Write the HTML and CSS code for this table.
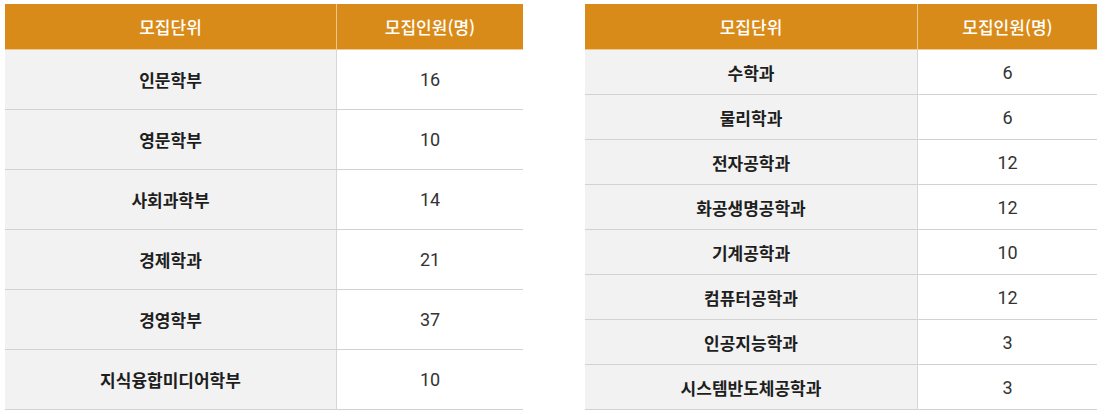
FILE: index.html
```html
<!DOCTYPE html>
<html lang="ko">
<head>
<meta charset="utf-8">
<link rel="stylesheet" href="styles.css">
</head>
<body>
<div class="wrap">
  <div class="tbl tbl-left">
    <div class="th c1">모집단위</div><div class="th c2">모집인원(명)</div>
    <div class="td c1">인문학부</div><div class="td c2">16</div>
    <div class="td c1">영문학부</div><div class="td c2">10</div>
    <div class="td c1">사회과학부</div><div class="td c2">14</div>
    <div class="td c1">경제학과</div><div class="td c2">21</div>
    <div class="td c1">경영학부</div><div class="td c2">37</div>
    <div class="td c1">지식융합미디어학부</div><div class="td c2">10</div>
  </div>
  <div class="tbl tbl-right">
    <div class="th c1">모집단위</div><div class="th c2">모집인원(명)</div>
    <div class="td c1">수학과</div><div class="td c2">6</div>
    <div class="td c1">물리학과</div><div class="td c2">6</div>
    <div class="td c1">전자공학과</div><div class="td c2">12</div>
    <div class="td c1">화공생명공학과</div><div class="td c2">12</div>
    <div class="td c1">기계공학과</div><div class="td c2">10</div>
    <div class="td c1">컴퓨터공학과</div><div class="td c2">12</div>
    <div class="td c1">인공지능학과</div><div class="td c2">3</div>
    <div class="td c1">시스템반도체공학과</div><div class="td c2">3</div>
  </div>
</div>
</body>
</html>
```
FILE: styles.css
```css
* { box-sizing: border-box; }
html, body { margin: 0; padding: 0; background: #fff; }
body {
  font-family: "Roboto", "Noto Sans CJK KR", sans-serif;
  font-size: 17px;
  color: #222;
}
.wrap {
  display: flex;
  align-items: flex-start;
  gap: 62px;
  padding: 4px 5px 0 5px;
}
.tbl {
  display: grid;
  grid-template-rows: 46px;
}
.tbl-left { grid-template-columns: 332px 186px; grid-auto-rows: 60px; }
.tbl-right { grid-template-columns: 333px 179px; grid-auto-rows: 45px; }
.th {
  background: #d98b19;
  color: #fff;
  font-family: "Noto Sans CJK KR", sans-serif;
  font-weight: 500;
  border-bottom: 1px solid #f1c88e;
  display: flex;
  align-items: center;
  justify-content: center;
  padding-bottom: 1px;
}
.th.c1 { border-right: 1px solid #eec690; }
.td {
  display: flex;
  align-items: center;
  justify-content: center;
  border-bottom: 1px solid #d2d2d2;
}
.td.c1 {
  background: #f2f2f2;
  border-right: 1px solid #d6d6d6;
  font-family: "Noto Sans CJK KR", sans-serif;
  font-weight: 700;
  color: #1e1e1e;
}
.td.c2 {
  background: #fff;
  color: #333;
  font-size: 18px;
  font-weight: 400;
}
```
